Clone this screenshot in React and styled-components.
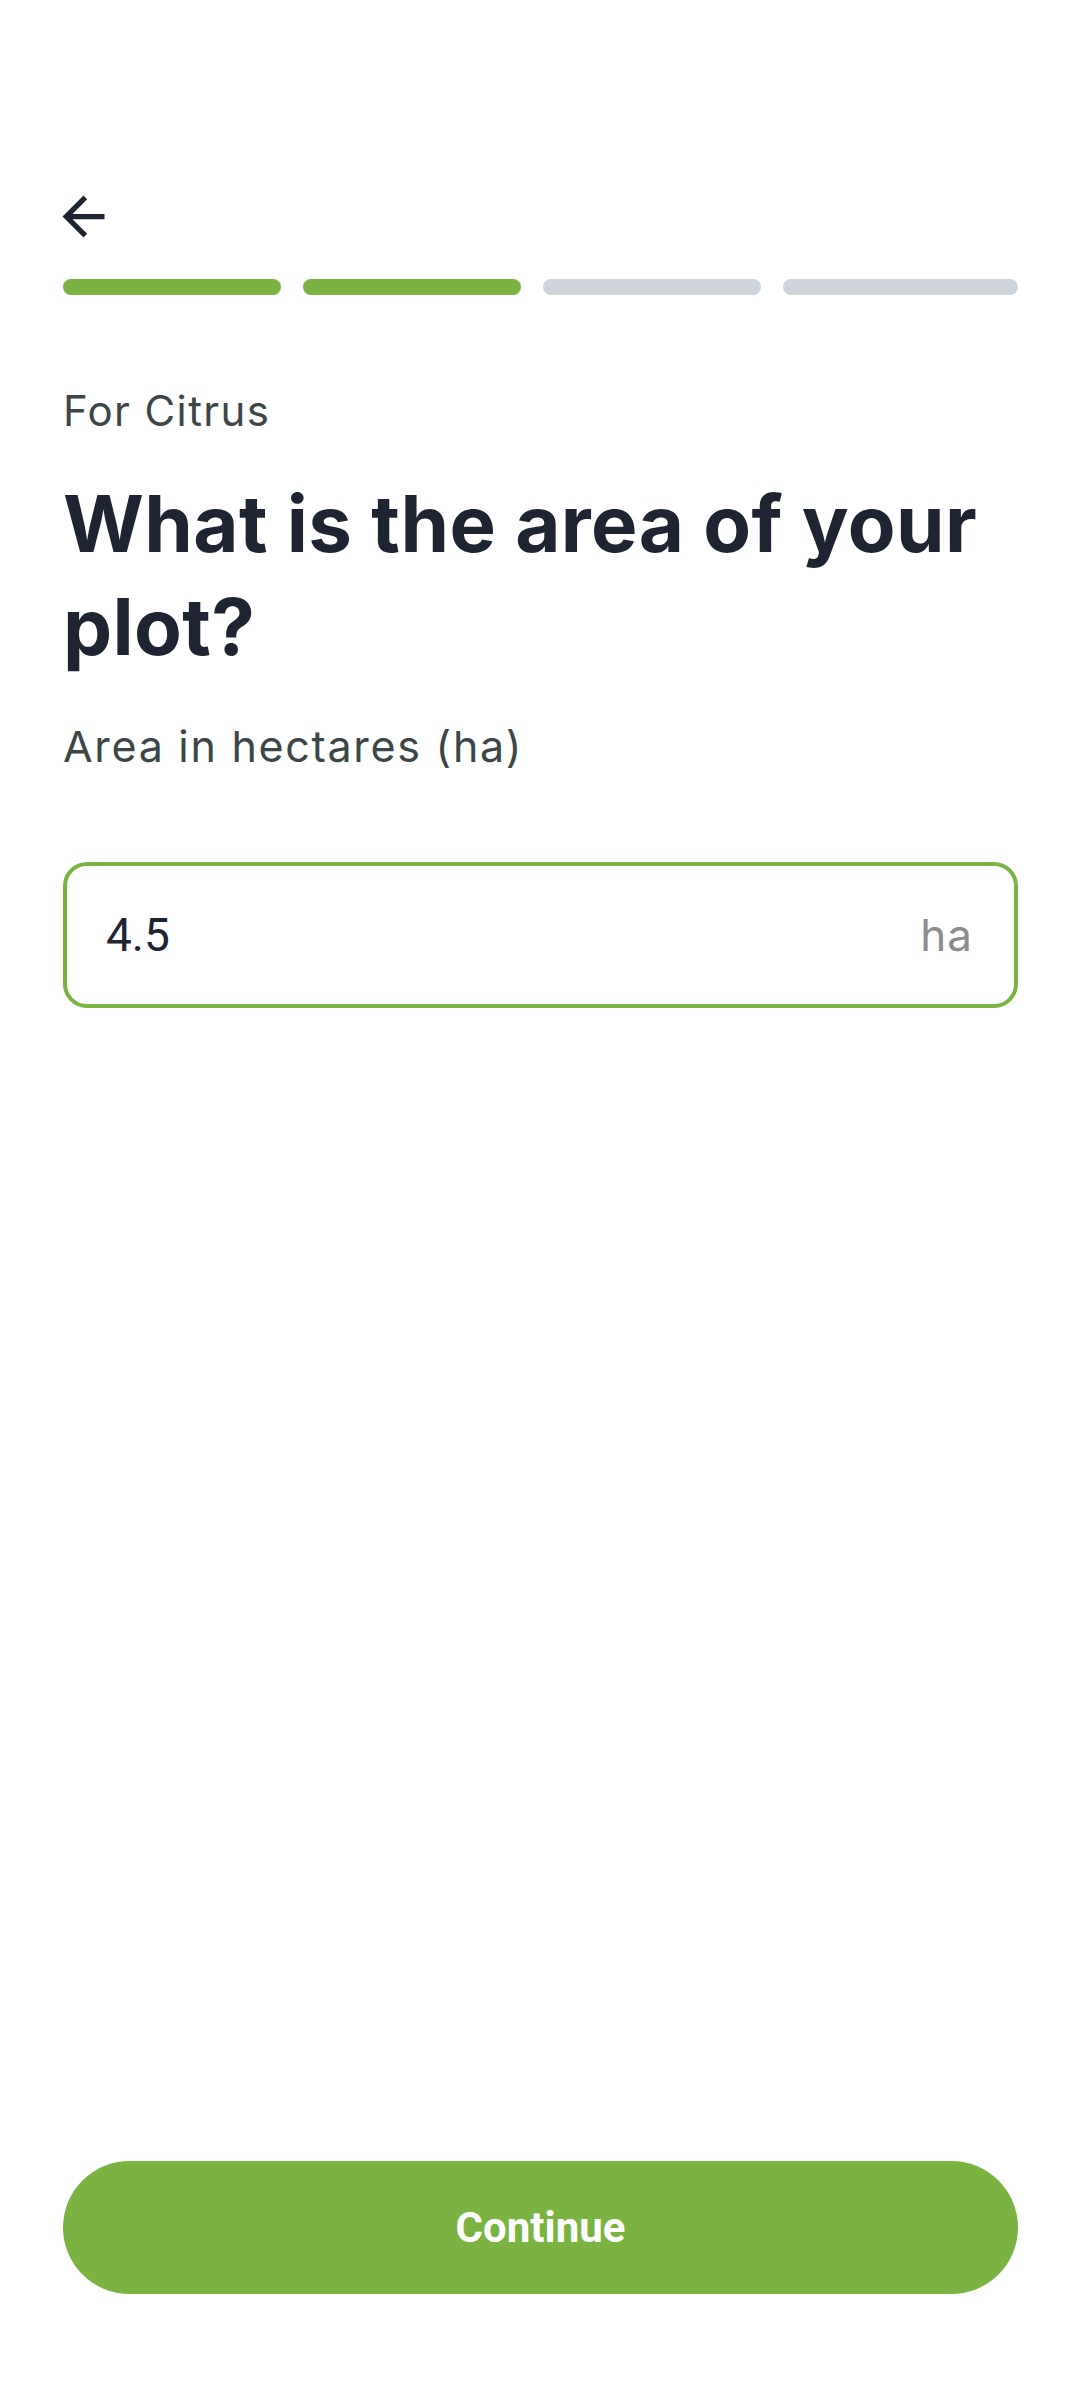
import React, { useState } from "react";
import styled, { createGlobalStyle } from "styled-components";
import { MdArrowBack } from "react-icons/md";

const GlobalStyle = createGlobalStyle`
  * { box-sizing: border-box; }
  html, body { margin: 0; padding: 0; background: #ffffff; }
`;

const GREEN = "#7ab342";

const Page = styled.div`
  width: 1080px;
  height: 2400px;
  padding: 0 62px 106px 63px;
  display: flex;
  flex-direction: column;
  font-family: Inter, "Noto Sans", sans-serif;
  background: #ffffff;
`;

const BackBtn = styled.button`
  margin-top: 185px;
  margin-left: -11px;
  width: 63px;
  height: 63px;
  padding: 0;
  border: none;
  background: none;
  color: #1f2433;
  display: flex;
  align-items: center;
  justify-content: center;
  cursor: pointer;
`;

const Steps = styled.div`
  margin-top: 31px;
  display: flex;
  gap: 22px;
`;

const Step = styled.div`
  height: 16px;
  border-radius: 8px;
  width: ${(p) => (p.$last ? "auto" : "218px")};
  flex: ${(p) => (p.$last ? "1" : "none")};
  background: ${(p) => (p.$done ? GREEN : "#d0d5dc")};
`;

const Crop = styled.div`
  margin-top: 86px;
  font-size: 42px;
  line-height: 60px;
  letter-spacing: 1.4px;
  color: #3d4647;
  font-weight: 400;
`;

const Title = styled.h1`
  margin: 31px 0 0;
  font-size: 78px;
  line-height: 103px;
  font-weight: 700;
  letter-spacing: 0.4px;
  color: #1f2433;
`;

const Hint = styled.div`
  margin-top: 38px;
  font-size: 43px;
  line-height: 60px;
  letter-spacing: 1.7px;
  color: #3d4647;
`;

const Field = styled.label`
  margin-top: 86px;
  height: 146px;
  border: 4.5px solid ${GREEN};
  border-radius: 24px;
  display: flex;
  align-items: center;
  padding: 0 41px 0 39px;
`;

const Input = styled.input`
  flex: 1;
  min-width: 0;
  border: none;
  outline: none;
  background: transparent;
  font-family: Roboto, sans-serif;
  font-size: 46px;
  color: #1f2433;
  padding: 0;
`;

const Unit = styled.span`
  font-size: 44px;
  letter-spacing: 1px;
  color: #8c8c8c;
`;

const ContinueBtn = styled.button`
  margin-top: auto;
  height: 133px;
  border: none;
  border-radius: 67px;
  background: ${GREEN};
  color: #ffffff;
  font-family: Roboto, sans-serif;
  font-weight: 700;
  font-size: 42px;
  cursor: pointer;
`;

const steps = [true, true, false, false];

export default function App() {
  const [area, setArea] = useState("4.5");

  return (
    <>
      <GlobalStyle />
      <Page>
        <BackBtn aria-label="Back">
          <MdArrowBack size={63} />
        </BackBtn>
        <Steps>
          {steps.map((done, i) => (
            <Step key={i} $done={done} $last={i === steps.length - 1} />
          ))}
        </Steps>
        <Crop>For Citrus</Crop>
        <Title>What is the area of your plot?</Title>
        <Hint>Area in hectares (ha)</Hint>
        <Field>
          <Input value={area} onChange={(e) => setArea(e.target.value)} />
          <Unit>ha</Unit>
        </Field>
        <ContinueBtn>Continue</ContinueBtn>
      </Page>
    </>
  );
}
